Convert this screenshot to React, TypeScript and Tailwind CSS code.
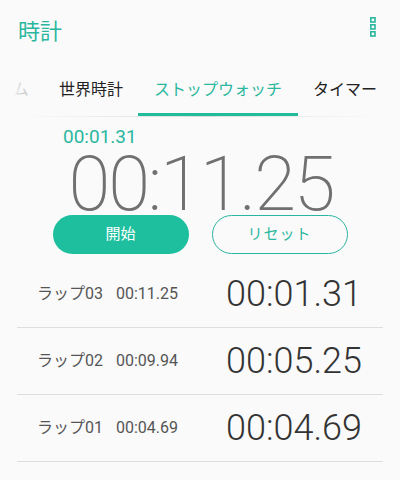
import React from 'react';

const FONT = "font-['Roboto','Noto_Sans_CJK_JP',sans-serif]";

type Lap = { label: string; total: string; split: string };

const laps: Lap[] = [
    { label: 'ラップ03', total: '00:11.25', split: '00:01.31' },
    { label: 'ラップ02', total: '00:09.94', split: '00:05.25' },
    { label: 'ラップ01', total: '00:04.69', split: '00:04.69' },
];

const MenuIcon: React.FC = () => (
    <svg width="10" height="22" viewBox="0 0 10 22" fill="none" stroke="#2bb79f" strokeWidth="1.6">
        <rect x="2.8" y="1.8" width="4.2" height="4.2" />
        <rect x="2.8" y="8.8" width="4.2" height="4.2" />
        <rect x="2.8" y="15.8" width="4.2" height="4.2" />
    </svg>
);

const tabs = [
    { name: 'アラーム', width: 'w-[94px]', state: 'faded' },
    { name: '世界時計', width: 'w-[94px]', state: 'idle' },
    { name: 'ストップウォッチ', width: 'w-[160px]', state: 'active' },
    { name: 'タイマー', width: 'w-[94px]', state: 'idle' },
];

const App: React.FC = () => {
    return (
        <div className={`w-[400px] h-[480px] overflow-hidden bg-[#fafafa] ${FONT}`}>
            {/* header */}
            <div className="h-[64px] flex items-start justify-between pl-[18px] pr-[22px] pt-[16px]">
                <h1 className="text-[22px] leading-[32px] text-[#2bb79f]">時計</h1>
                <MenuIcon />
            </div>

            {/* tabs, scrolled so the alarm tab is mostly off screen */}
            <div className="relative h-[52px] overflow-hidden">
                <div className="flex h-full ml-[-50px]">
                    {tabs.map((tab) => (
                        <div
                            key={tab.name}
                            className={`${tab.width} shrink-0 h-full flex items-center justify-center text-[16px] ${
                                tab.state === 'active'
                                    ? 'text-[#2bb79f] border-b-[3px] border-[#22bc9d] pt-[3px]'
                                    : tab.state === 'faded'
                                      ? 'text-[#cfcfcf]'
                                      : 'text-[#222]'
                            }`}
                        >
                            {tab.name}
                        </div>
                    ))}
                </div>
                <div className="absolute inset-y-0 left-0 w-[22px] bg-linear-to-r from-[#fafafa] from-60% to-transparent" />
            </div>
            <div className="mx-[20px] h-px bg-linear-to-r from-transparent via-[#dcdcdc] to-transparent" />

            {/* stopwatch */}
            <div className="pt-[10px]">
                <div className="pl-[63px] text-[19px] leading-[19px] text-[#2bb79f] mb-[7px]">00:01.31</div>
                <div className="text-center text-[76px] leading-[62px] font-extralight text-[#707070] tracking-[-2.2px] pl-[2px]">
                    00:11.25
                </div>
                <div className="flex justify-center gap-[23px]">
                    <button className="w-[136px] h-[39px] rounded-full bg-[#1ebf9e] text-white text-[15px]">開始</button>
                    <button className="w-[136px] h-[39px] rounded-full border border-[#2bb79f] text-[#2bb79f] text-[15px] tracking-[1px]">
                        リセット
                    </button>
                </div>
            </div>

            {/* laps */}
            <div className="mt-[7px] mx-[17px]">
                {laps.map((lap) => (
                    <div key={lap.label} className="h-[67px] flex items-center border-b border-[#dedede] pl-[20px] pr-[21px]">
                        <span className="w-[79px] text-[16px] text-[#555]">{lap.label}</span>
                        <span className="text-[16px] text-[#555]">{lap.total}</span>
                        <span className="ml-auto text-[36px] font-light text-[#333] leading-none">{lap.split}</span>
                    </div>
                ))}
            </div>
        </div>
    );
};

export default App;
